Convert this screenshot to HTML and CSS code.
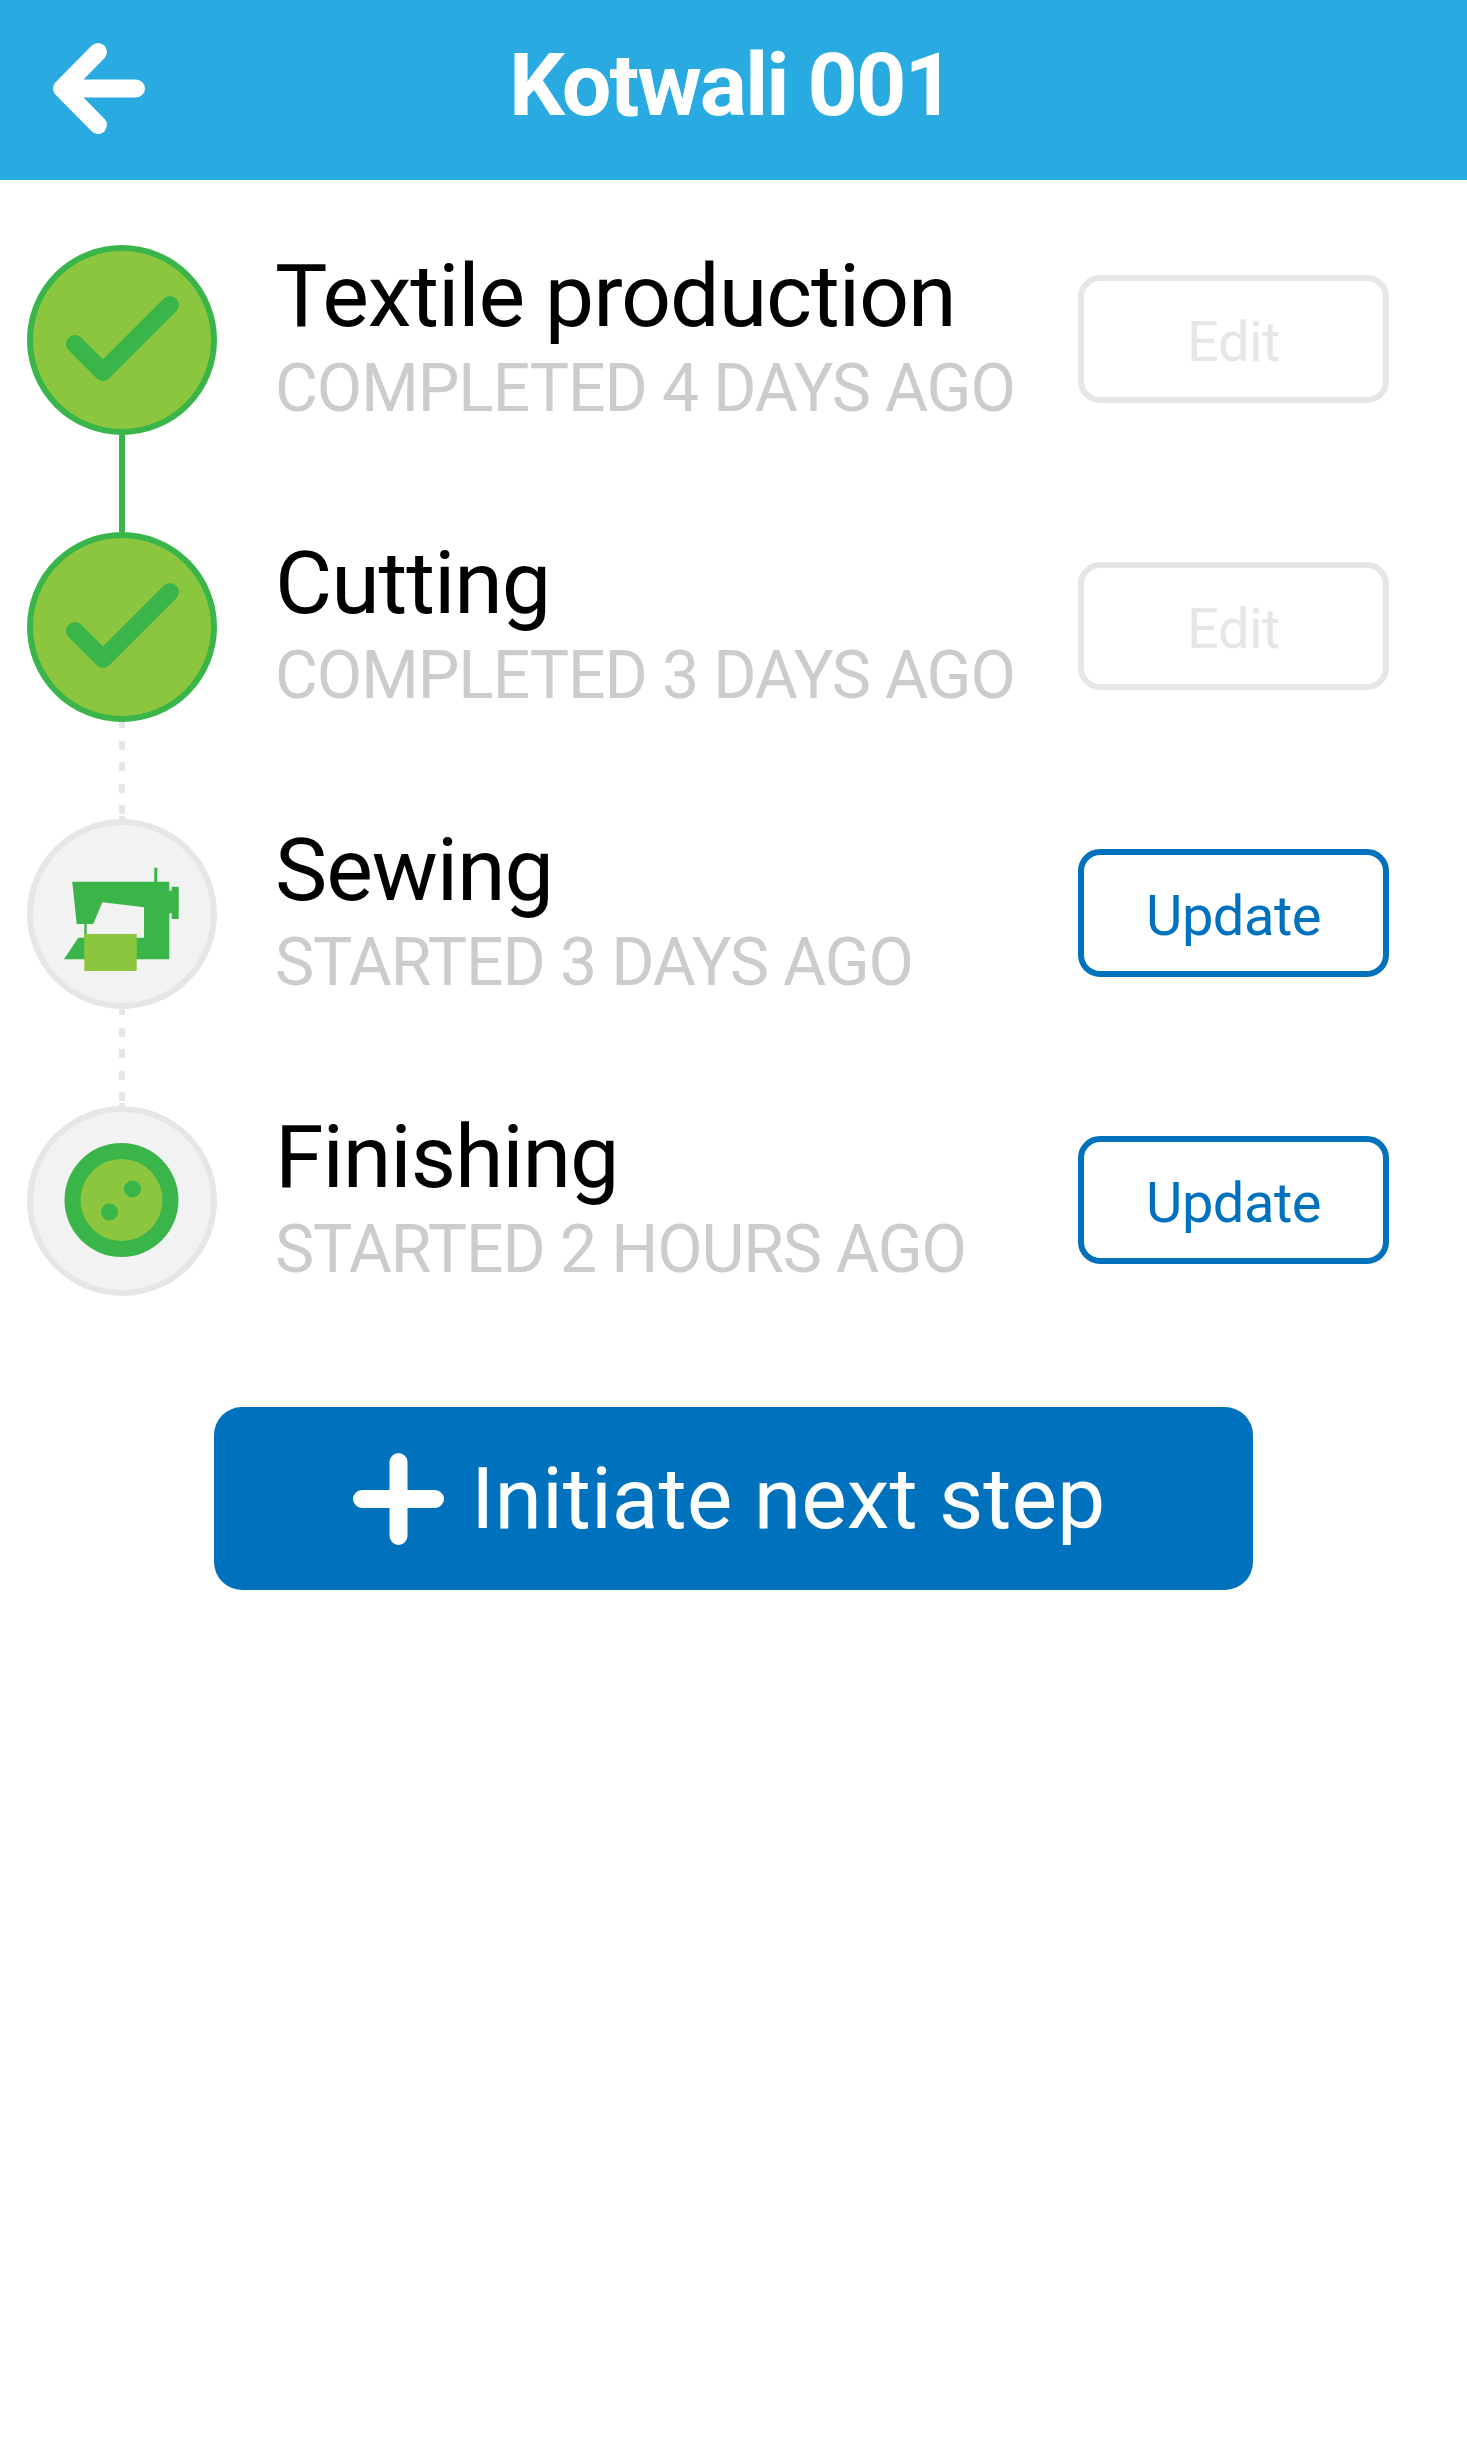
FILE: index.html
```html
<!DOCTYPE html>
<html lang="en">

<head>
  <meta charset="UTF-8">
  <meta name="viewport" content="width=device-width, initial-scale=1.0">
  <link rel="stylesheet" href="styles.css">
  <title>Kotwali 001</title>
</head>

<body>
  <header class="top-bar">
    <a class="back" href="#" aria-label="Back">
      <svg width="92" height="92" viewBox="0 0 92 92">
        <path d="M45 9 L9 45.500 L45 82 M9 45.500 H83" fill="none" stroke="#fff" stroke-width="18" stroke-linecap="round" stroke-linejoin="round" />
      </svg>
    </a>
    <h1>Kotwali 001</h1>
  </header>

  <main class="steps">
    <!-- Textile production -->
    <div class="step">
      <div class="rail">
        <svg class="badge" viewBox="0 0 190 190">
          <circle cx="95" cy="95" r="92" fill="#8cc63f" stroke="#39b54a" stroke-width="6" />
          <path d="M48 99 L76 127 L143 60" fill="none" stroke="#39b54a" stroke-width="18" stroke-linecap="round" stroke-linejoin="round" />
        </svg>
        <div class="link link-done"></div>
      </div>
      <div class="info">
        <div class="name">Textile production</div>
        <div class="when">COMPLETED 4 DAYS AGO</div>
      </div>
      <button class="action action-off">Edit</button>
    </div>

    <!-- Cutting -->
    <div class="step">
      <div class="rail">
        <svg class="badge" viewBox="0 0 190 190">
          <circle cx="95" cy="95" r="92" fill="#8cc63f" stroke="#39b54a" stroke-width="6" />
          <path d="M48 99 L76 127 L143 60" fill="none" stroke="#39b54a" stroke-width="18" stroke-linecap="round" stroke-linejoin="round" />
        </svg>
        <div class="link"></div>
      </div>
      <div class="info">
        <div class="name">Cutting</div>
        <div class="when">COMPLETED 3 DAYS AGO</div>
      </div>
      <button class="action action-off">Edit</button>
    </div>

    <!-- Sewing -->
    <div class="step">
      <div class="rail">
        <svg class="badge" viewBox="0 0 190 190">
          <circle cx="95" cy="95" r="92" fill="#f2f2f2" stroke="#e6e6e6" stroke-width="6" />
          <path fill="#39b54a" fill-rule="evenodd" d="M45.300 62.700 H127.300 V48.700 H130.300 V62.700 H142.300 V71.700 H144.700 V67.700 H151.700 V100 H144.700 V94.300 H142.300 V140.300 H37 L51.300 118.700 H57.300 V105 H49.700 Z M75.300 83.300 L66.300 105 H59.700 V118.700 H117 V88.300 Z" />
          <rect x="57.300" y="115" width="52.400" height="37" fill="#8cc63f" />
        </svg>
        <div class="link"></div>
      </div>
      <div class="info">
        <div class="name">Sewing</div>
        <div class="when">STARTED 3 DAYS AGO</div>
      </div>
      <button class="action">Update</button>
    </div>

    <!-- Finishing -->
    <div class="step">
      <div class="rail">
        <svg class="badge" viewBox="0 0 190 190">
          <circle cx="95" cy="95" r="92" fill="#f2f2f2" stroke="#e6e6e6" stroke-width="6" />
          <circle cx="94.500" cy="94" r="57" fill="#39b54a" />
          <circle cx="94.500" cy="94" r="41" fill="#8cc63f" />
          <circle cx="105.500" cy="83" r="8.500" fill="#39b54a" />
          <circle cx="82.500" cy="106" r="8.500" fill="#39b54a" />
        </svg>
      </div>
      <div class="info">
        <div class="name">Finishing</div>
        <div class="when">STARTED 2 HOURS AGO</div>
      </div>
      <button class="action">Update</button>
    </div>
  </main>

  <button class="next-step">
    <svg width="91" height="92" viewBox="0 0 91 92">
      <path d="M45.500 9 V83 M9 46 H82" fill="none" stroke="#fff" stroke-width="18" stroke-linecap="round" />
    </svg>
    <span>Initiate next step</span>
  </button>
</body>

</html>
```

FILE: styles.css
```css
body {
  font-family: Roboto, "Liberation Sans", sans-serif;
  background-color: #ffffff;
  margin: 0;
  padding: 0;
}

.top-bar {
  display: flex;
  align-items: center;
  height: 180px;
  padding-left: 53px;
  background-color: #29abe2;
}

.back {
  display: flex;
  margin-top: -3px;
}

.top-bar h1 {
  margin: -11px 0 0 364px;
  font-size: 88px;
  font-weight: 700;
  letter-spacing: -2px;
  line-height: 1;
  color: #ffffff;
}

.steps {
  padding: 65px 78px 0 27px;
}

.step {
  display: flex;
  align-items: flex-start;
}

.rail {
  display: flex;
  flex-direction: column;
  align-items: center;
  width: 190px;
}

.badge {
  display: block;
  width: 190px;
  height: 190px;
}

.link {
  width: 6px;
  height: 97px;
  background: repeating-linear-gradient(#e6e6e6 0, #e6e6e6 9px, transparent 9px, transparent 21.600px) 0 -3px;
}

.link-done {
  background: #39b54a;
}

.info {
  flex: 1;
  height: 190px;
  margin-left: 58px;
}

.name {
  font-size: 88px;
  line-height: 102px;
  letter-spacing: -1.100px;
  color: #000000;
}

.when {
  margin-top: 2px;
  font-size: 66px;
  line-height: 80px;
  letter-spacing: -1.100px;
  color: #cccccc;
}

.action {
  box-sizing: border-box;
  width: 311px;
  height: 128px;
  margin-top: 30px;
  padding: 5px 0 0;
  font-family: inherit;
  font-size: 56px;
  letter-spacing: -0.500px;
  color: #0071bc;
  background-color: #ffffff;
  border: 6px solid #0071bc;
  border-radius: 22px;
}

.action-off {
  color: #e6e6e6;
  border-color: #e6e6e6;
}

.next-step {
  display: flex;
  align-items: center;
  gap: 27px;
  box-sizing: border-box;
  width: 1039px;
  height: 183px;
  margin: 111px 0 0 214px;
  padding: 0 0 0 139px;
  font-family: inherit;
  font-size: 86px;
  color: #ffffff;
  background-color: #0071bc;
  border: none;
  border-radius: 28px;
}
```
